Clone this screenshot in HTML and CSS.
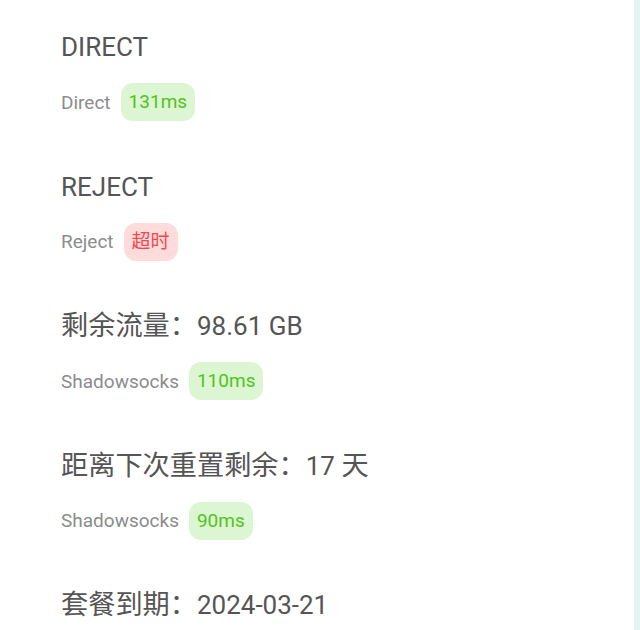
FILE: index.html
```html
<!DOCTYPE html>
<html lang="zh-CN">
<head>
<meta charset="utf-8">
<link rel="stylesheet" href="styles.css">
</head>
<body>
<div class="page">
  <main class="list">
    <section class="item">
      <div class="title">DIRECT</div>
      <div class="row"><span class="type">Direct</span><span class="badge ok">131ms</span></div>
    </section>
    <section class="item">
      <div class="title">REJECT</div>
      <div class="row"><span class="type">Reject</span><span class="badge bad"><span class="cjk-s">超时</span></span></div>
    </section>
    <section class="item">
      <div class="title"><span class="cjk">剩余流量：</span>98.61 GB</div>
      <div class="row"><span class="type">Shadowsocks</span><span class="badge ok">110ms</span></div>
    </section>
    <section class="item">
      <div class="title"><span class="cjk">距离下次重置剩余：</span>17 <span class="cjk">天</span></div>
      <div class="row"><span class="type">Shadowsocks</span><span class="badge ok">90ms</span></div>
    </section>
    <section class="item">
      <div class="title"><span class="cjk">套餐到期：</span>2024-03-21</div>
    </section>
  </main>
  <aside class="edge"></aside>
</div>
</body>
</html>
```
FILE: styles.css
```css
html, body {
  margin: 0;
  padding: 0;
  height: 100%;
  overflow: hidden;
}
body {
  background: #ffffff;
  font-family: Roboto, "Noto Sans CJK SC", sans-serif;
}
.page {
  display: flex;
  height: 630px;
}
.list {
  flex: 1;
  padding: 29px 0 0 61px;
  display: flex;
  flex-direction: column;
}
.edge {
  width: 6px;
  background: #e6f3f3;
}
.item {
  display: flex;
  flex-direction: column;
  gap: 18px;
  margin-bottom: 47.5px;
}
.title {
  font-size: 26px;
  line-height: 36px;
  height: 36px;
  color: #555555;
  white-space: nowrap;
}
.cjk {
  font-size: 27.2px;
}
.row {
  display: flex;
  align-items: center;
  gap: 10px;
  height: 38px;
}
.type {
  font-size: 19px;
  color: #8c8c8c;
}
.badge {
  font-size: 19px;
  line-height: 38px;
  height: 38px;
  padding: 0 8px;
  border-radius: 12px;
}
.cjk-s {
  font-size: 19px;
}
.ok {
  background: #dcf5d3;
  color: #52c41a;
}
.bad {
  background: #ffdcdc;
  color: #f5474f;
}
```
